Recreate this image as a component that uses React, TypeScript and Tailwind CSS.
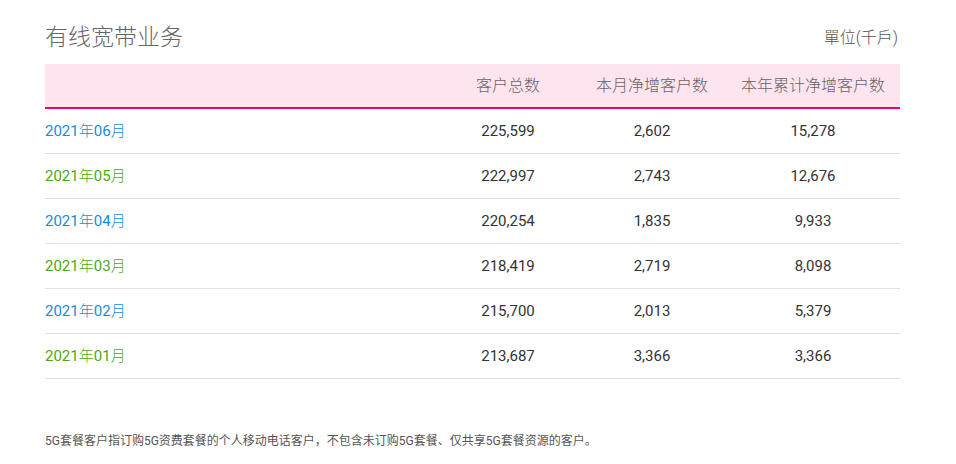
const rows = [
  { month: "06", total: "225,599", monthly: "2,602", yearly: "15,278", color: "text-[#1a8bd6]" },
  { month: "05", total: "222,997", monthly: "2,743", yearly: "12,676", color: "text-[#4aa914]" },
  { month: "04", total: "220,254", monthly: "1,835", yearly: "9,933", color: "text-[#1a8bd6]" },
  { month: "03", total: "218,419", monthly: "2,719", yearly: "8,098", color: "text-[#4aa914]" },
  { month: "02", total: "215,700", monthly: "2,013", yearly: "5,379", color: "text-[#1a8bd6]" },
  { month: "01", total: "213,687", monthly: "3,366", yearly: "3,366", color: "text-[#4aa914]" },
];

const font = "font-['Roboto','Noto_Sans_CJK_SC',sans-serif]";

export default function App() {
  return (
    <div className={`w-[956px] h-[464px] bg-white ${font} text-[#333]`}>
      <div className="pl-[45px] pr-[56px] pt-[20px]">
        <div className="flex items-center justify-between h-[36px]">
          <h1 className="text-[23px] font-light text-[#666] leading-[36px]">有线宽带业务</h1>
          <span className="text-[16px] font-light text-[#555] leading-[20px] mr-[2px]">單位(千戶)</span>
        </div>
        <div className="mt-[8px]">
          <div className="flex h-[45px] items-center bg-[#fde4ef] border-b-[2px] border-[#e4007f] text-[16px] font-light text-[#666]">
            <div className="flex-1" />
            <div className="w-[140px] text-center">客户总数</div>
            <div className="w-[148px] text-center">本月净增客户数</div>
            <div className="w-[174px] text-center">本年累计净增客户数</div>
          </div>
          {rows.map((r) => (
            <div
              key={r.month}
              className="flex h-[45px] items-center border-b border-[#e0e0e0] text-[15px]"
            >
              <div className={`flex-1 ${r.color}`}>
                2021<span className="font-light">年</span>{r.month}<span className="font-light">月</span>
              </div>
              <div className="w-[140px] text-center">{r.total}</div>
              <div className="w-[148px] text-center">{r.monthly}</div>
              <div className="w-[174px] text-center">{r.yearly}</div>
            </div>
          ))}
        </div>
        <p className="mt-[54px] text-[12px] text-[#555] leading-[16px]">
          5G套餐客户指订购5G资费套餐的个人移动电话客户，不包含未订购5G套餐、仅共享5G套餐资源的客户。
        </p>
      </div>
    </div>
  );
}
